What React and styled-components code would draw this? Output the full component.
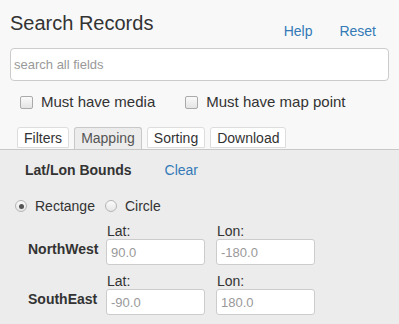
import React from 'react'
import styled, { createGlobalStyle } from 'styled-components'

const Global = createGlobalStyle`
body{
  margin:0;
  background:#f8f8f8;
  font-family:"Liberation Sans", Arial, sans-serif;
  color:#333;
}
`;

const Page = styled.div`
width:399px;
height:324px;
overflow:hidden;
`;

const Header = styled.div`
display:flex;
align-items:flex-start;
padding:11px 10px 0 10px;
`;

const Title = styled.h1`
margin:0;
font-size:20px;
line-height:24px;
font-weight:400;
flex:1;
`;

const Links = styled.div`
display:flex;
gap:27px;
padding-top:12px;
padding-right:13px;
`;

const Link = styled.a`
color:#337ab7;
font-size:14px;
line-height:16px;
text-decoration:none;
`;

const Search = styled.input`
display:block;
box-sizing:border-box;
margin:9px 10px 0 10px;
width:379px;
height:33px;
border:1px solid #ccc;
border-radius:4px;
background:#fff;
padding:0 3px;
font-family:inherit;
font-size:13px;
&::placeholder{ color:#999; }
`;

const Checks = styled.div`
display:flex;
align-items:center;
padding:12px 0 0 20px;
gap:30px;
`;

const CheckLabel = styled.label`
display:flex;
align-items:center;
gap:8px;
font-size:15px;
line-height:18px;
`;

const Box = styled.span`
width:11px;
height:11px;
border:1px solid #aaa;
border-radius:2px;
background:linear-gradient(#fafafa,#e4e4e4);
`;

const Tabs = styled.div`
display:flex;
gap:5px;
padding:16px 0 0 17px;
border-bottom:1px solid #c8c8c8;
`;

const Tab = styled.div`
box-sizing:border-box;
height:${p => (p.$active ? '22px' : '21px')};
margin-bottom:${p => (p.$active ? '-1px' : '1px')};
padding:0 6px;
font-size:14px;
line-height:20px;
color:${p => (p.$active ? '#555' : '#333')};
border:1px solid ${p => (p.$active ? '#c8c8c8' : '#ddd')};
border-bottom:${p => (p.$active ? 'none' : '1px solid #ddd')};
border-radius:3px 3px 0 0;
background:${p => (p.$active ? '#ececec' : '#fff')};
`;

const Panel = styled.div`
background:#ececec;
height:200px;
padding-top:10px;
`;

const BoundsHead = styled.div`
display:flex;
align-items:center;
gap:33px;
padding-left:25px;
font-size:14px;
line-height:20px;
`;

const Bold = styled.span`
font-weight:700;
`;

const Radios = styled.div`
display:flex;
align-items:center;
padding:17px 0 0 15px;
gap:10px;
font-size:14px;
line-height:18px;
`;

const RadioLabel = styled.label`
display:flex;
align-items:center;
gap:8px;
`;

const Radio = styled.span`
box-sizing:border-box;
width:12px;
height:12px;
border-radius:50%;
border:1px solid #b5b5b5;
background:linear-gradient(#fbfbfb,#e6e6e6);
display:flex;
align-items:center;
justify-content:center;
&::after{
  content:'';
  width:${p => (p.$on ? '5px' : '0')};
  height:${p => (p.$on ? '5px' : '0')};
  border-radius:50%;
  background:#555;
}
`;

const Grid = styled.div`
display:grid;
grid-template-columns:78px 110px 100px;
row-gap:9px;
padding:9px 0 0 28px;
`;

const Corner = styled.div`
font-weight:700;
font-size:14px;
line-height:16px;
align-self:end;
padding-bottom:8px;
`;

const Field = styled.div`
display:flex;
flex-direction:column;
font-size:14px;
line-height:14px;
padding-left:1px;
`;

const Coord = styled.input`
box-sizing:border-box;
width:99px;
height:26px;
margin:1px 0 0 -1px;
border:1px solid #ccc;
border-radius:3px;
background:#fff;
padding:0 4px;
font-family:inherit;
font-size:13px;
&::placeholder{ color:#999; }
`;

const rows = [
  { name: 'NorthWest', lat: '90.0', lon: '-180.0' },
  { name: 'SouthEast', lat: '-90.0', lon: '180.0' },
];

export default function App() {
  return (
    <Page>
      <Global />
      <Header>
        <Title>Search Records</Title>
        <Links>
          <Link>Help</Link>
          <Link>Reset</Link>
        </Links>
      </Header>
      <Search placeholder="search all fields" />
      <Checks>
        <CheckLabel><Box />Must have media</CheckLabel>
        <CheckLabel><Box />Must have map point</CheckLabel>
      </Checks>
      <Tabs>
        <Tab>Filters</Tab>
        <Tab $active>Mapping</Tab>
        <Tab>Sorting</Tab>
        <Tab>Download</Tab>
      </Tabs>
      <Panel>
        <BoundsHead>
          <Bold>Lat/Lon Bounds</Bold>
          <Link>Clear</Link>
        </BoundsHead>
        <Radios>
          <RadioLabel><Radio $on />Rectange</RadioLabel>
          <RadioLabel><Radio />Circle</RadioLabel>
        </Radios>
        <Grid>
          {rows.map(r => (
            <React.Fragment key={r.name}>
              <Corner>{r.name}</Corner>
              <Field>Lat:<Coord placeholder={r.lat} /></Field>
              <Field>Lon:<Coord placeholder={r.lon} /></Field>
            </React.Fragment>
          ))}
        </Grid>
      </Panel>
    </Page>
  )
}
